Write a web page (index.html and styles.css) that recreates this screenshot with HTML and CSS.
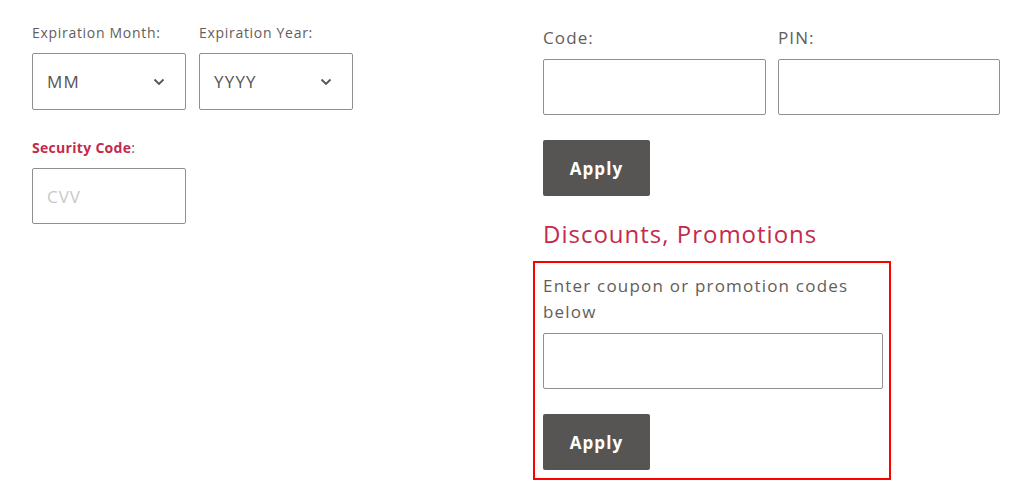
FILE: index.html
```html
<!DOCTYPE html>
<html lang="en">
<head>
    <meta charset="UTF-8">
    <meta name="viewport" content="width=device-width, initial-scale=1.0">
    <title>Payment</title>
    <link rel="stylesheet" href="styles.css">
</head>
<body>
    <div class="checkout">
        <div class="card-col">
            <div class="row">
                <div class="field">
                    <label class="small-label">Expiration Month:</label>
                    <div class="select">
                        <span>MM</span>
                        <svg width="12" height="8" viewBox="0 0 12 8"><path d="M1.5 1.5 6 6l4.5-4.5" fill="none" stroke="#555" stroke-width="1.8"/></svg>
                    </div>
                </div>
                <div class="field">
                    <label class="small-label">Expiration Year:</label>
                    <div class="select">
                        <span>YYYY</span>
                        <svg width="12" height="8" viewBox="0 0 12 8"><path d="M1.5 1.5 6 6l4.5-4.5" fill="none" stroke="#555" stroke-width="1.8"/></svg>
                    </div>
                </div>
            </div>
            <div class="field security">
                <label class="small-label required"><b>Security Code</b>:</label>
                <input type="text" class="box cvv" placeholder="CVV">
            </div>
        </div>

        <div class="gift-col">
            <div class="row gift-row">
                <div class="field wide">
                    <label class="big-label">Code:</label>
                    <input type="text" class="box">
                </div>
                <div class="field wide pin">
                    <label class="big-label">PIN:</label>
                    <input type="text" class="box">
                </div>
            </div>
            <button class="apply">Apply</button>

            <h2 class="section-title">Discounts, Promotions</h2>
            <div class="promo">
                <p class="promo-text">Enter coupon or promotion codes below</p>
                <input type="text" class="box promo-input">
                <button class="apply">Apply</button>
            </div>
        </div>
    </div>
</body>
</html>
```

FILE: styles.css
```css
body {
    margin: 0;
    background: #fff;
    font-family: "Open Sans", Arial, sans-serif;
    color: #645d59;
}
.checkout {
    display: flex;
    padding: 23px 0 0 32px;
}
.card-col {
    width: 511px;
}
.gift-col {
    width: 457px;
    padding-top: 3px;
}
.row {
    display: flex;
    gap: 13px;
}
.gift-row {
    gap: 12px;
}
.field {
    display: flex;
    flex-direction: column;
}
.small-label {
    font-size: 14px;
    line-height: 20px;
    letter-spacing: 0.7px;
    margin-bottom: 10px;
}
.big-label {
    font-size: 17px;
    line-height: 24px;
    letter-spacing: 1.1px;
    margin-bottom: 9px;
}
.required b {
    color: #c42a4c;
    font-weight: 700;
    letter-spacing: 0.3px;
}
.select, .box {
    box-sizing: border-box;
    width: 154px;
    height: 57px;
    border: 1px solid #8f8f8f;
    border-radius: 2px;
    background: #fff;
}
.select {
    display: flex;
    align-items: center;
    justify-content: space-between;
    padding: 0 20px 0 14px;
    font-size: 17px;
    letter-spacing: 1.2px;
    color: #555;
}
.box {
    font-family: inherit;
    font-size: 17px;
    letter-spacing: 1px;
    padding: 0 14px;
    outline: none;
}
.box::placeholder {
    color: #c8c8c8;
}
.security {
    margin-top: 28px;
}
.cvv {
    height: 56px;
}
.wide .box {
    width: 223px;
    height: 56px;
}
.pin .box {
    width: 222px;
}
.apply {
    width: 107px;
    height: 56px;
    margin-top: 25px;
    border: none;
    border-radius: 2px;
    background: #575553;
    color: #fff;
    font-family: inherit;
    font-size: 17px;
    font-weight: 700;
    letter-spacing: 1.1px;
    cursor: pointer;
}
.section-title {
    margin: 22px 0 0;
    font-size: 24px;
    line-height: 32px;
    font-weight: 400;
    letter-spacing: 1px;
    color: #c42a4c;
}
.promo {
    width: 358px;
    box-sizing: border-box;
    margin: 11px 0 0 -10px;
    padding: 10px 6px 8px 8px;
    border: 2px solid #f00;
}
.promo-text {
    margin: 0 0 8px;
    font-size: 17px;
    line-height: 26px;
    letter-spacing: 1.2px;
}
.promo-input {
    width: 100%;
    height: 56px;
}
.promo .apply {
    display: block;
    margin-top: 25px;
}
```
